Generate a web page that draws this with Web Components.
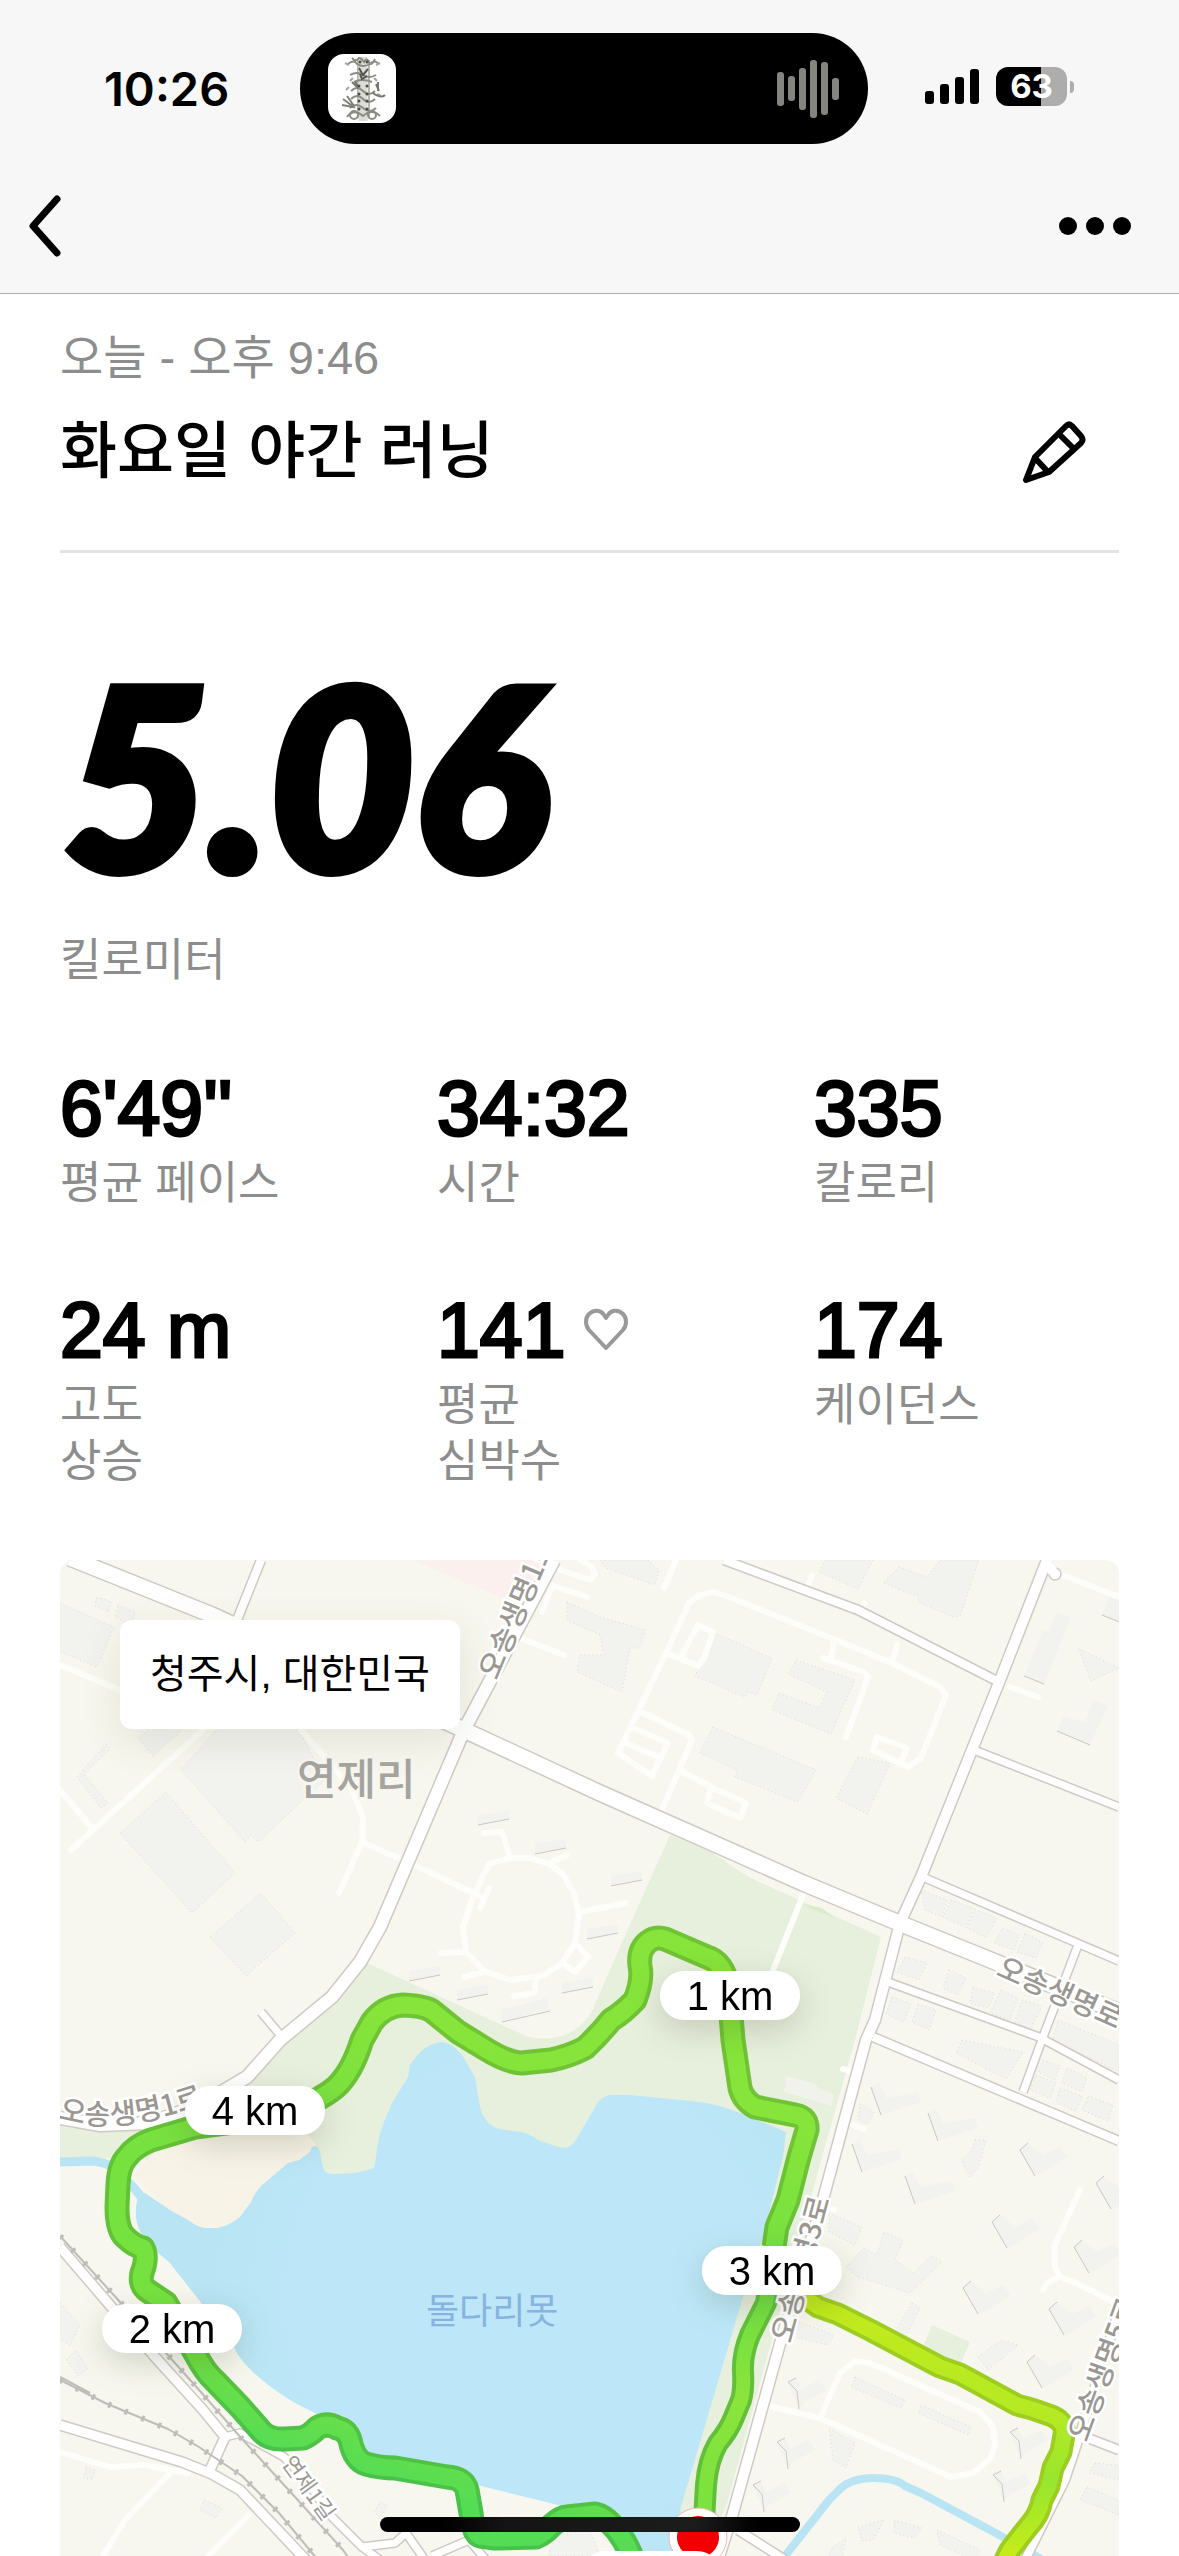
<!DOCTYPE html>
<html lang="ko">
<head>
<meta charset="utf-8">
<meta name="viewport" content="width=device-width, initial-scale=1">
<title>화요일 야간 러닝</title>
<style>
    body {
        margin: 0;
        background: #ffffff;
        color: #000000;
        font-family: "Liberation Sans", "Noto Sans CJK KR", sans-serif;
        --muted: #8d8d8d;
        --gutter: 60px;
    }
</style>
</head>
<body>
<run-page>
    <status-bar slot="top" time="10:26" battery="63"></status-bar>
    <nav-bar slot="top"></nav-bar>
    <run-title>
        <span slot="date">오늘 - 오후 9:46</span>
        화요일 야간 러닝
    </run-title>
    <run-distance value="5.06">킬로미터</run-distance>
    <run-stats>
        <run-stat value="6'49''">평균 페이스</run-stat>
        <run-stat value="34:32">시간</run-stat>
        <run-stat value="335">칼로리</run-stat>
        <run-stat value="24 m">고도<br>상승</run-stat>
        <run-stat value="141" heart>평균<br>심박수</run-stat>
        <run-stat value="174">케이던스</run-stat>
    </run-stats>
    <route-map>청주시, 대한민국</route-map>
</run-page>
<home-indicator></home-indicator>

<script>
class RunPage extends HTMLElement {
    constructor() {
        super();
        this.attachShadow({ mode: 'open' }).innerHTML = `
            <style>
                :host { display: block; }
                header {
                    background: #f7f7f7;
                    border-bottom: 1px solid #b0b0b0;
                }
                main {
                    padding: 0 var(--gutter);
                }
            </style>
            <header><slot name="top"></slot></header>
            <main><slot></slot></main>
        `;
    }
}

class StatusBar extends HTMLElement {
    constructor() {
        super();
        const bars = [34, 25, 42, 58, 53, 22];
        this.attachShadow({ mode: 'open' }).innerHTML = `
            <style>
                :host {
                    display: grid;
                    grid-template-columns: 1fr 568px 1fr;
                    align-items: center;
                    height: 111px;
                    padding: 33px 11px 16px 0;
                    font-family: Inter, sans-serif;
                }
                .time {
                    padding-left: 104px;
                    font-size: 47px;
                    font-weight: 600;
                }
                .island {
                    display: flex;
                    align-items: center;
                    justify-content: space-between;
                    box-sizing: border-box;
                    height: 111px;
                    padding: 0 29px 0 28px;
                    border-radius: 56px;
                    background: #000000;
                }
                .art {
                    width: 68px;
                    height: 69px;
                    border-radius: 16px;
                    background: #ffffff;
                }
                .wave {
                    display: flex;
                    align-items: center;
                    gap: 4px;
                }
                .wave i {
                    width: 7px;
                    border-radius: 3px;
                    background: #858580;
                }
                .right {
                    display: flex;
                    align-items: center;
                    gap: 17px;
                    padding: 0 0 4px 57px;
                }
                .battery {
                    display: flex;
                    align-items: center;
                    gap: 3px;
                }
                .level {
                    width: 71px;
                    border-radius: 12px;
                    background: linear-gradient(90deg, #000000 63%, #adadad 63%);
                    color: #ffffff;
                    font-size: 33px;
                    font-weight: 700;
                    line-height: 39px;
                    text-align: center;
                }
                .tip {
                    width: 4px;
                    height: 12px;
                    border-radius: 0 6px 6px 0;
                    background: #adadad;
                }
            </style>
            <span class="time"></span>
            <div class="island">
                <svg class="art" viewBox="0 0 68 69" fill="none" stroke="#8b8d84" stroke-width="2" aria-hidden="true">
                    <g stroke="#b5b7ae">
                        <path d="M30 6v58M41 6v58"/>
                        <path d="M35 3v64" stroke-width="9" stroke="#dcddd7"/>
                    </g>
                    <path d="M24 4q4 4 6 1t6 3q3-5 5 0t6-3M20 10q6-5 9 0 6 4 13 0 4-5 9 0M22 21q7-4 13 0t13 0M26 28q8-4 18 0M23 37q6-6 12 0t12 0M23 45q6-6 12 0t12 0M22 54q6-6 13 0t13 0M19 63q7-9 16-1 9-8 17 0"/>
                    <path d="M17 9l4 2M52 9l-4 2M25 24l-3 3M46 24l3 3M21 33l-3 3M49 40l4 2" stroke="#a5a79e"/>
                    <path d="M31 14l4 7 5-6M32 20l2 5 5-3" stroke="#55574f" stroke-width="2"/>
                    <path d="M24 28l6 6M27 27l3 6M45 39q8 6 12 2M48 30l3 7M50 28v9" stroke="#777970"/>
                    <path d="M15 45l12 9M14 51l11 2M19 42l7 10" stroke="#7f8178" stroke-width="2"/>
                    <g fill="#4b4d46" stroke="none">
                        <circle cx="32" cy="8" r="1.5"/><circle cx="39" cy="8" r="1.5"/>
                        <circle cx="31" cy="32" r="1.5"/><circle cx="39" cy="32" r="1.5"/>
                        <circle cx="31" cy="40" r="1.5"/><circle cx="39" cy="40" r="1.5"/>
                        <circle cx="31" cy="47" r="1.5"/><circle cx="39" cy="47" r="1.5"/>
                        <circle cx="31" cy="55" r="1.5"/><circle cx="39" cy="55" r="1.5"/>
                    </g>
                    <circle cx="26" cy="61" r="4"/><circle cx="44" cy="61" r="4"/>
                </svg>
                <div class="wave">${bars.map(h => `<i style="height:${h}px"></i>`).join('')}</div>
            </div>
            <div class="right">
                <svg width="54" height="36" viewBox="0 0 54 36" aria-hidden="true">
                    <rect y="22" width="9" height="13" rx="3"/>
                    <rect x="15" y="15" width="9" height="20" rx="3"/>
                    <rect x="30" y="8" width="9" height="27" rx="3"/>
                    <rect x="45" width="9" height="35" rx="3"/>
                </svg>
                <div class="battery"><span class="level"></span><span class="tip"></span></div>
            </div>
        `;
        this.shadowRoot.querySelector('.time').textContent = this.getAttribute('time');
        this.shadowRoot.querySelector('.level').textContent = this.getAttribute('battery');
    }
}

class NavBar extends HTMLElement {
    constructor() {
        super();
        this.attachShadow({ mode: 'open' }).innerHTML = `
            <style>
                :host {
                    display: flex;
                    align-items: center;
                    justify-content: space-between;
                    height: 133px;
                    padding: 0 44px 0 24px;
                }
                button {
                    padding: 0;
                    border: 0;
                    background: none;
                    color: inherit;
                }
                svg { display: block; }
            </style>
            <button aria-label="뒤로">
                <svg width="40" height="64" viewBox="0 0 40 64" fill="none" stroke="currentColor" stroke-width="7" stroke-linecap="round" stroke-linejoin="round">
                    <path d="M33 4L9 31l24 27"/>
                </svg>
            </button>
            <button aria-label="더 보기">
                <svg width="76" height="20" viewBox="0 0 76 20" fill="currentColor">
                    <circle cx="9" cy="9" r="9"/><circle cx="36" cy="9" r="9"/><circle cx="63" cy="9" r="9"/>
                </svg>
            </button>
        `;
    }
}

class RunTitle extends HTMLElement {
    constructor() {
        super();
        this.attachShadow({ mode: 'open' }).innerHTML = `
            <style>
                :host {
                    display: block;
                    padding: 32px 0 48px;
                    border-bottom: 3px solid #e4e4e4;
                }
                p {
                    margin: 0;
                    color: var(--muted);
                    font-size: 47px;
                    line-height: 64px;
                }
                .row {
                    display: flex;
                    align-items: center;
                    justify-content: space-between;
                    padding-right: 32px;
                    margin-top: 12px;
                }
                h1 {
                    margin: 0;
                    font-size: 62px;
                    font-weight: 500;
                    line-height: 100px;
                }
                button {
                    padding: 0;
                    border: 0;
                    background: none;
                    color: inherit;
                }
                svg { display: block; }
            </style>
            <p><slot name="date"></slot></p>
            <div class="row">
                <h1><slot></slot></h1>
                <button aria-label="이름 수정">
                    <svg width="66" height="66" viewBox="0 0 66 66" fill="none" stroke="currentColor" stroke-width="6" stroke-linejoin="round">
                        <path d="M5 61L14 38 45 7q3-3 6 0l9 10q3 4 0 7L28 53z"/>
                        <path d="M38 15l14 14M14 39l13 14"/>
                    </svg>
                </button>
            </div>
        `;
    }
}

class RunDistance extends HTMLElement {
    constructor() {
        super();
        this.attachShadow({ mode: 'open' }).innerHTML = `
            <style>
                :host {
                    display: block;
                    padding-top: 120px;
                }
                strong {
                    display: block;
                    padding-left: 4px;
                    font-family: Lato, sans-serif;
                    font-size: 250px;
                    font-style: italic;
                    font-weight: 900;
                    line-height: 200px;
                    -webkit-text-stroke: 10px currentColor;
                }
                p {
                    margin: 60px 0 0;
                    color: var(--muted);
                    font-size: 45px;
                    line-height: 56px;
                }
            </style>
            <strong></strong>
            <p><slot></slot></p>
        `;
        this.shadowRoot.querySelector('strong').textContent = this.getAttribute('value');
    }
}

class RunStats extends HTMLElement {
    constructor() {
        super();
        this.attachShadow({ mode: 'open' }).innerHTML = `
            <style>
                :host {
                    display: grid;
                    grid-template-columns: repeat(3, 1fr);
                    gap: 56px 72px;
                    padding: 74px 0 53px;
                }
            </style>
            <slot></slot>
        `;
    }
}

class RunStat extends HTMLElement {
    constructor() {
        super();
        const heart = this.hasAttribute('heart') ? `
            <svg width="46" height="44" viewBox="0 0 46 44" fill="none" stroke="#999999" stroke-width="4" stroke-linejoin="round" aria-hidden="true">
                <path d="M23 40L6 22C2 17 2 10 6 6c5-5 12-4 15 1l2 3 2-3c3-5 10-6 15-1 4 4 4 11 0 16z"/>
            </svg>` : '';
        this.attachShadow({ mode: 'open' }).innerHTML = `
            <style>
                :host { display: block; }
                div {
                    display: flex;
                    align-items: center;
                    gap: 18px;
                }
                strong {
                    font-size: 77px;
                    font-weight: 400;
                    line-height: 90px;
                    -webkit-text-stroke: 3px currentColor;
                }
                p {
                    margin: 0;
                    padding: 3px 0 17px;
                    color: var(--muted);
                    font-size: 45px;
                    line-height: 56px;
                }
            </style>
            <div><strong></strong>${heart}</div>
            <p><slot></slot></p>
        `;
        this.shadowRoot.querySelector('strong').textContent = this.getAttribute('value');
    }
}

// Map geometry, in the units of the map's viewBox
const ROADS = [
    // [width, path]
    [7, 'M974 1750L1119 1807M925 1878L1119 1961M1078 1945L1043 2037 1023 2092M888 1982L1039 2037 1119 2080M261 2012L282 2037'],
    [8, 'M724 1560L858 1610 995 1680M873 2037L1119 2141M261 1560L225 1650M1080 2435L1119 2450M738 2530L785 2560'],
    [7, 'M225 2437L240 2433 284 2457 306 2480 332 2517 362 2547 395 2543 406 2533 425 2560M432 2556L469 2540 486 2560M362 2547L380 2560'],
    [9, 'M60 2247L120 2317 155 2357 203 2410 225 2437 210 2470M60 2425L182 2462 212 2474 240 2490 306 2560'],
    [8, 'M1119 2310L1076 2447 1065 2480 1025 2560'],
    [10, 'M1047 1560L1000 1680 921 1877 900 1923 875 2020 866 2040 822 2203 781 2340 733 2513 718 2560'],
    [12, 'M554 1560L464 1730 380 1927 360 1962 332 1997 280 2040 247 2077 200 2105 150 2123 100 2125 60 2118'],
    [15, 'M70 1558L212 1615 464 1730 600 1793 803 1883 899 1923 1119 2012']
];

const LANES = `M60 1665L120 1690M203 1730L71 1850M60 1790L92 1828M301 1730L351 1787 363 1817 362 1842 339 1893
    M362 1842L414 1865 482 1897M489 1888L480 1908M484 1833L502 1832 510 1857M549 1863L567 1855M580 1912L626 1903
    M441 1953L465 1952M464 1977L484 1972M536 1980L534 1993 514 1996M575 1943L588 1957 575 1972 562 1963
    M489 1864L510 1858 530 1858 549 1864 563 1874 575 1896 579 1915 575 1943 562 1963 543 1976 510 1980 484 1971 466 1952 463 1927 473 1897z
    M552 1567L590 1580 595 1574 592 1567 580 1560M536 1580L587 1597M552 1587L542 1612M517 1637L564 1655
    M676 1560L664 1588M812 1575L807 1590M864 1603L861 1612M661 1812L679 1770 692 1740 689 1735 641 1712
    M618 1753L666 1653 689 1603 700 1595 714 1592 729 1597 836 1640 892 1663 940 1687 946 1695 921 1758 908 1767 873 1750 877 1737 907 1748 901 1762
    M897 1645L892 1663M834 1643L831 1658M823 1658L864 1672 868 1677 846 1737M666 1653L698 1666M704 1658L713 1632 698 1625 681 1657M704 1658L698 1666
    M618 1753L652 1776 668 1743 633 1728M626 1743L661 1758M679 1770L711 1787 746 1803 740 1818 707 1803 711 1787
    M1062 1575L1119 1597M1010 1687L1038 1697M803 1895L772 1973M1080 2190L1054 2247 1055 2267 1060 2277 1048 2282 1043 2290
    M1060 2277L1076 2283 1117 2303M772 2407L820 2418 840 2373 855 2361 870 2363 980 2412 993 2427 995 2443 991 2458 973 2473 951 2477 820 2418
    M843 2069L850 2071M853 2125L864 2129M826 2208L834 2210M60 2452L110 2467 144 2465 188 2473M170 2473L125 2520 103 2556M249 2515L208 2556`;

const BLOCKS = [
    '225,1720 299,1730 325,1780 258,1842 251,1835 245,1842 181,1770', '120,1833 166,1792 235,1873 192,1913',
    '210,1937 261,1893 295,1933 246,1976', '60,1603 114,1627 97,1667 60,1652', '138,1738 151,1727 184,1728 153,1756',
    '97,1597 112,1602 108,1612 95,1606', '118,1605 135,1612 132,1625 115,1617', '77,1777 106,1744 110,1749 84,1774 108,1803 101,1808',
    '714,1633 772,1658 757,1695 748,1692 745,1697 695,1676',
    '796,1660 855,1680 831,1734 772,1710 779,1693 820,1708 827,1692 788,1674',
    '713,1727 816,1770 798,1802 735,1777 737,1770 700,1753', '858,1757 890,1763 867,1814 836,1798',
    '825,1560 873,1560 858,1589 819,1572',
    '899,1567 927,1577 940,1560 979,1560 960,1616 953,1617 918,1602 919,1597 883,1583',
    '567,1602 600,1617 646,1630 639,1648 630,1648 622,1692 577,1672 580,1655 604,1655 600,1635 567,1620',
    '600,1560 648,1560 659,1570 655,1585 606,1568',
    '1078,1648 1119,1668 1091,1681',
    '921,1890 947,1900 942,1917 925,1910', '951,1900 973,1908 966,1927 943,1917', '975,1909 997,1918 986,1938 967,1928',
    '1003,1928 1019,1935 1014,1950 994,1943', '1025,1933 1043,1943 1036,1958 1017,1952', '905,1957 927,1963 919,1980 897,1972',
    '949,1970 966,1978 958,1995 943,1988', '973,1987 995,1993 988,2008 970,2003', '1001,1990 1018,1998 1010,2020 990,2013',
    '1022,2000 1042,2006 1030,2030 1015,2022', '892,1997 911,2004 904,2022 886,2014', '918,2004 936,2010 929,2030 912,2022',
    '1058,2020 1119,2045 1119,2072 1053,2040', '962,2040 1023,2052 1006,2079 956,2053', '1043,2060 1060,2066 1055,2080 1038,2072',
    '1067,2068 1087,2078 1082,2092 1062,2083', '1036,2075 1056,2083 1050,2098 1030,2090', '1060,2088 1082,2096 1076,2111 1056,2102',
    '1088,2096 1113,2105 1108,2121 1082,2110',
    '829,2213 862,2227 855,2245 829,2232',
    '884,2232 903,2240 895,2260 914,2273 932,2255 942,2262 910,2293 858,2277 846,2267 864,2248 877,2255',
    '855,2377 905,2400 901,2408 851,2387', '921,2405 971,2427 969,2435 918,2413', '978,2357 1002,2340 1018,2345 988,2370',
    '912,2303 920,2308 906,2337 894,2333', '829,2428 855,2443 846,2468 833,2460', '795,2320 834,2335 828,2345 798,2338',
    '975,2140 986,2140 978,2168 970,2177 961,2160 971,2152', '860,2104 874,2112 868,2124 858,2120',
    '858,2527 884,2520 873,2540 862,2541', '894,2520 922,2528 914,2538 894,2533', '937,2530 980,2550 975,2560 940,2545',
    '1095,2463 1119,2465 1119,2480 1089,2473', '1087,2487 1119,2500 1119,2515 1080,2500', '832,2548 846,2538 842,2556 826,2560',
    '60,2303 80,2325 70,2345 60,2340', '66,2360 76,2350 88,2368 78,2376', '86,2467 95,2470 92,2480 84,2478',
    '204,2500 222,2508 216,2518 200,2510', '380,2502 388,2506 380,2518 374,2512', '555,2535 590,2530 600,2556 548,2556'
];

const MARKS = { // repeated building outlines: [outline, shaded edge, positions]
    slab: ['0,0 31,-5 31,4 0,10', '0,10 31,4', [[478, 1815], [535, 1844], [611, 1876], [587, 1929], [409, 1971], [457, 1990], [562, 1983]]],
    wide: ['0,0 48,-12 48,-1 2,12', '2,12 50,1', [[500, 2010]]],
    angle: ['0,0 8,-4 15,11 47,5 50,15 10,28', '0,0 10,28', [[871, 2087], [928, 2113], [852, 2144], [905, 2176]]],
    wing: ['0,0 8,-7 23,5 40,-3 47,7 23,23 15,26', '8,-7 0,0 15,26', [[1020, 2150], [1096, 2183], [992, 2222], [1074, 2247], [963, 2288],
        [1049, 2309], [1027, 2362]]],
    wing2: ['0,0 8,-4 13,7 31,-2 38,8 16,20 11,27', '8,-4 0,0 9,9 11,27', [[788, 2382], [777, 2442], [753, 2485], [1010, 2432], [993, 2475]]],
    block: ['0,0 15,6 -12,72 -32,64 -13,18 -7,20', '-32,64 -12,72', [[1056, 1612]]],
    hook: ['0,0 15,6 -3,45 -36,31 -30,16 -8,22', '-36,31 -3,45', [[1093, 1700]]],
    cut: ['0,0 12,4 12,26 -8,18', '-8,18 12,26', [[1110, 1597]]]
};

const LAKE = `M443 2042C452 2044 458 2050 462 2055L475 2077 480 2107Q484 2124 499 2129L521 2132Q532 2135 538 2140L558 2147Q570 2150 576 2140
    L595 2107Q601 2096 610 2095L630 2095 700 2102Q717 2104 740 2113L786 2132 783 2157 762 2240 740 2307 681 2507 672 2560H640L610 2520 558 2505
    477 2485 440 2476 362 2453 354 2427 317 2414 295 2403Q275 2391 262 2380 240 2362 234 2347L199 2300 169 2262 151 2247Q130 2225 138 2197
    L145 2193 170 2210 188 2220Q199 2228 206 2228H218Q230 2225 240 2217L251 2202Q255 2192 262 2185L288 2163 299 2160 310 2152Q311 2146 315 2146T320 2152
    L323 2168Q325 2174 334 2174L355 2173 371 2169Q375 2168 375 2163L379 2137Q384 2120 392 2103L408 2077 410 2065Q425 2042 443 2042z`;

const TRACK_LOOP = `M774 2247L777 2227 788 2200 799 2157 807 2130Q808 2117 795 2115L755 2107Q743 2100 740 2088L733 2040 729 1990Q724 1962 707 1957
    L665 1939Q655 1936 648 1942 638 1950 640 1966 643 1980 635 2000 624 2012 611 2020 600 2034 585 2048 570 2056 551 2060L522 2063Q508 2063 484 2048
    L458 2032 432 2011Q425 2006 403 2005 384 2006 372 2022L362 2040Q352 2072 336 2087 318 2102 280 2116L195 2127 151 2140Q135 2146 127 2157
    119 2165 118 2184L117 2207Q117 2230 125 2237 134 2246 143 2248 148 2257 142 2273 139 2285 148 2291L166 2303 195 2353Q205 2372 214 2380L240 2407
    262 2432Q270 2440 285 2439L303 2438Q312 2434 317 2428 327 2422 337 2428 347 2430 350 2440 354 2460 366 2464 380 2468 395 2468L447 2477
    Q464 2478 467 2490L471 2513Q473 2534 480 2536L495 2538 536 2537Q544 2534 551 2526 562 2516 567 2517L595 2514Q604 2516 612 2525 625 2538 633 2560`;
const TRACK_END = 'M774 2247L766 2303 750 2335Q742 2355 743 2372T741 2400L734 2417Q729 2430 718 2443 708 2460 706 2485L704 2520';
const TRACK_EAST = `M785 2283L818 2307 838 2314 870 2330 940 2367 960 2374 984 2387 1017 2405 1032 2409 1052 2416Q1066 2422 1064 2435
    L1061 2452 1053 2468 1049 2486 1042 2500Q1040 2514 1028 2527L1010 2550 1004 2562`;

class RouteMap extends HTMLElement {
    constructor() {
        super();
        const roads = (extra, color) => ROADS
            .map(([w, d]) => `<path d="${d}" stroke="${color}" stroke-width="${w + extra}"/>`).join('');
        const marks = Object.values(MARKS).map(([shape, edge, spots]) => spots.map(([x, y]) => `
            <g transform="translate(${x} ${y})">
                <polygon points="${shape}" fill="#f2f3ef"/>
                <polyline points="${edge}" fill="none" stroke="#c8c8c4"/>
            </g>`).join('')).join('');
        const pin = (x, y, text) => `
            <g class="pin">
                <rect x="${x}" y="${y}" width="140" height="49" rx="24"/>
                <text x="${x + 70}" y="${y + 39}" text-anchor="middle">${text}</text>
            </g>`;
        const track = (d, width, edge, fill) => `
            <path d="${d}" stroke="${edge}" stroke-width="${width}"/>
            <path d="${d}" stroke="${fill}" stroke-width="${width - 8}"/>`;

        this.attachShadow({ mode: 'open' }).innerHTML = `
            <style>
                :host {
                    display: block;
                    position: relative;
                    overflow: hidden;
                    border-radius: 14px 14px 0 0;
                }
                svg {
                    display: block;
                    width: 100%;
                    height: auto;
                }
                .place {
                    position: absolute;
                    top: 60px;
                    left: 60px;
                    padding: 0 30px;
                    border-radius: 12px;
                    background: #ffffff;
                    box-shadow: 0 12px 40px rgba(80, 80, 50, 0.12);
                    font-size: 40px;
                    line-height: 109px;
                }
                .label {
                    fill: #9b9893;
                    stroke: #ffffff;
                    stroke-width: 5px;
                    paint-order: stroke;
                    font-size: 29px;
                    font-weight: 500;
                    font-family: "Noto Sans CJK KR", sans-serif;
                }
                .label.small { font-size: 22px; font-weight: 400; }
                .label.town { font-size: 43px; fill: #a5a4a0; stroke: #f7f7ef; }
                .label.water { font-size: 36px; font-weight: 400; fill: #87b3de; stroke: none; }
                .pin {
                    fill: #ffffff;
                    filter: drop-shadow(0 10px 16px rgba(60, 70, 40, 0.2));
                }
                .pin text { fill: #000000; font-size: 40px; }
            </style>
            <svg viewBox="60 1560 1059 996" role="img" aria-label="러닝 경로">
                <defs>
                    <linearGradient id="loop" gradientUnits="userSpaceOnUse" x1="500" y1="2050" x2="380" y2="2480">
                        <stop offset="0" stop-color="#86e43a"/>
                        <stop offset=".25" stop-color="#79e13f"/>
                        <stop offset=".8" stop-color="#75e23f"/>
                        <stop offset="1" stop-color="#55dc55"/>
                    </linearGradient>
                    <linearGradient id="loopEdge" gradientUnits="userSpaceOnUse" x1="500" y1="2050" x2="380" y2="2480">
                        <stop offset="0" stop-color="#70c334"/>
                        <stop offset=".25" stop-color="#66c037"/>
                        <stop offset=".8" stop-color="#60c238"/>
                        <stop offset="1" stop-color="#48c24a"/>
                    </linearGradient>
                    <linearGradient id="end" gradientUnits="userSpaceOnUse" x1="0" y1="2247" x2="0" y2="2500">
                        <stop offset="0" stop-color="#62dc46"/>
                        <stop offset=".6" stop-color="#8be43b"/>
                        <stop offset="1" stop-color="#7ce23e"/>
                    </linearGradient>
                    <linearGradient id="east" gradientUnits="userSpaceOnUse" x1="0" y1="2300" x2="0" y2="2560">
                        <stop offset="0" stop-color="#c2ea1c"/>
                        <stop offset=".45" stop-color="#b4ea24"/>
                        <stop offset=".7" stop-color="#98e62e"/>
                        <stop offset="1" stop-color="#c8ec18"/>
                    </linearGradient>
                    <radialGradient id="water" gradientUnits="userSpaceOnUse" cx="530" cy="2300" r="330">
                        <stop offset=".7" stop-color="#bde7f8"/>
                        <stop offset="1" stop-color="#b8e4f3"/>
                    </radialGradient>
                    <path id="west" d="M58 2118Q112 2136 200 2106"/>
                </defs>
                <rect x="60" y="1560" width="1059" height="996" fill="#f7f7ef"/>
                <path fill="#fbf0ee" d="M412 1560H554L530 1608 495 1595z"/>
                <path fill="#e7efdd" d="M367 1963L528 2037Q570 2045 591 2013L620 1947 670 1835 711 1852 747 1876 770 1887 881 1937 855 2040 822 2157
                    726 2507 700 2560H640L620 2200H317L134 2157 60 2160V2125L150 2123 247 2080z"/>
                <path fill="#d9edc9" d="M770 1887L803 1904 822 1908 835 1918 812 1909z"/>
                <path fill="#e7efdd" d="M932 2325L970 2342 960 2365 923 2347z"/>
                <path fill="#f7f3e7" d="M134 2175L165 2140 220 2125 290 2125Q318 2135 320 2160L250 2235 180 2225z"/>
                <path fill="#f7f7ef" d="M60 2168L112 2170 135 2200 160 2280 60 2240z"/>
                <path fill="none" stroke="#b8e4f4" stroke-width="9" d="M60 2162L92 2161Q105 2162 114 2168L134 2188 142 2198"/>
                <path fill="url(#water)" d="${LAKE}"/>
                <path fill="none" stroke="#b8e4f4" stroke-width="8" d="M785 2556L829 2500 838 2491Q850 2478 873 2478T905 2486L921 2493 1003 2537 1043 2560"/>
                ${BLOCKS.map(p => `<polygon points="${p}" fill="#f2f3ef" stroke="#dcdcd6" stroke-dasharray="1 3"/>`).join('')}
                <polygon points="786,2076 814,2083 820,2089 834,2095 832,2106 784,2092" fill="#f1f2ec"/>
                ${marks}
                <g fill="none" stroke-linejoin="round">
                    <path d="${LANES}" stroke="#fdfdf9" stroke-width="6" stroke-linecap="round"/>
                    ${roads(3, '#cfcac3')}
                    <circle cx="1055" cy="1574" r="6" fill="#ffffff" stroke="#cfcac3" stroke-width="1.5"/>
                    ${roads(0, '#ffffff')}
                    <path d="M1046 1562L1053 1572" stroke="#ffffff" stroke-width="10"/>
                    <g stroke="#bdbdb9" stroke-width="2">
                        <path d="M60 2236L121 2303 192 2382 243 2440 295 2497 343 2550 350 2560"/>
                        <path d="M60 2380L105 2403 168 2429 199 2447 242 2476 279 2513 318 2560M60 2377L90 2393"/>
                        <g stroke-width="6" stroke-dasharray="3 15">
                            <path d="M60 2236L121 2303 192 2382 243 2440 295 2497 343 2550 350 2560"/>
                            <path d="M60 2380L105 2403 168 2429 199 2447 242 2476 279 2513 318 2560"/>
                        </g>
                    </g>
                    ${track(TRACK_EAST, 23, '#9ecd22', 'url(#east)')}
                    ${track(TRACK_END, 22, '#62bf3a', 'url(#end)')}
                    ${track(TRACK_LOOP, 25, 'url(#loopEdge)', 'url(#loop)')}
                </g>
                <text class="label" transform="translate(497 1681) rotate(-67)">오송생명1로</text>
                <text class="label" transform="translate(995 1975) rotate(24)">오송생명로</text>
                <text class="label" transform="translate(791 2344) rotate(-75)">오송생명3로</text>
                <text class="label" transform="translate(1087 2443) rotate(-70)">오송생명5로</text>
                <text class="label"><textPath href="#west">오송생명1로</textPath></text>
                <text class="label small" transform="translate(281 2463) rotate(54)">연제1길</text>
                <text class="label town" x="297" y="1795">연제리</text>
                <text class="label water" x="426" y="2324">돌다리못</text>
                <circle cx="698" cy="2537" r="29" fill="#ffffff" stroke="#f5b5b0"/>
                <circle cx="698" cy="2537" r="21" fill="#f20000"/>
                ${pin(660, 1971, '1 km')}
                ${pin(102, 2304, '2 km')}
                ${pin(702, 2246, '3 km')}
                ${pin(185, 2086, '4 km')}
                <rect x="581" y="2551" width="140" height="49" rx="24" fill="#ffffff"/>
            </svg>
            <div class="place"><slot></slot></div>
        `;
    }
}

class HomeIndicator extends HTMLElement {
    constructor() {
        super();
        this.attachShadow({ mode: 'open' }).innerHTML = `
            <style>
                :host {
                    display: flex;
                    justify-content: center;
                    position: fixed;
                    right: 0;
                    bottom: 24px;
                    left: 0;
                    pointer-events: none;
                }
                div {
                    width: 420px;
                    height: 15px;
                    border-radius: 8px;
                    background: linear-gradient(90deg, #000000 15%, #141414 30%, #1c1c1c 75%, #000000 90%);
                }
            </style>
            <div></div>
        `;
    }
}

customElements.define('run-page', RunPage);
customElements.define('status-bar', StatusBar);
customElements.define('nav-bar', NavBar);
customElements.define('run-title', RunTitle);
customElements.define('run-distance', RunDistance);
customElements.define('run-stats', RunStats);
customElements.define('run-stat', RunStat);
customElements.define('route-map', RouteMap);
customElements.define('home-indicator', HomeIndicator);
</script>
</body>
</html>
